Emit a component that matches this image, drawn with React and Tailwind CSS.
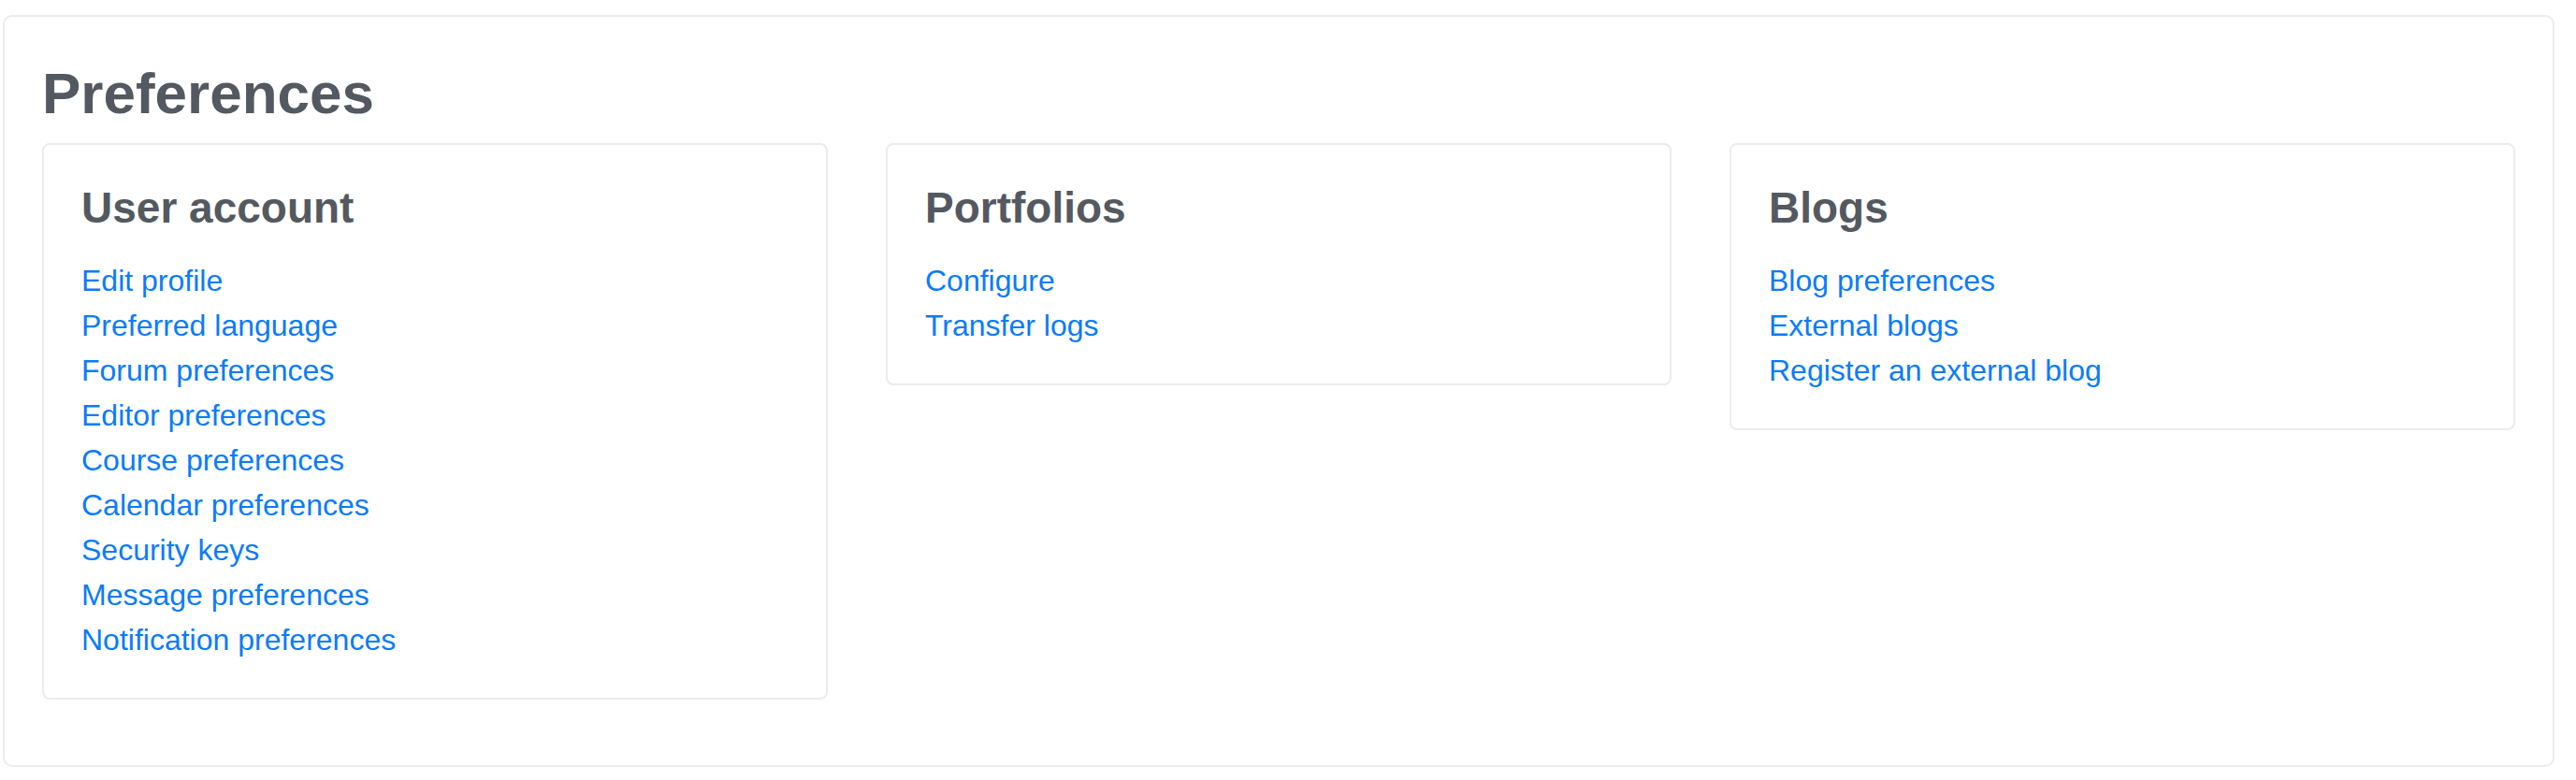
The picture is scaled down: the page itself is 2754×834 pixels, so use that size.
const sections = [
  {
    title: 'User account',
    links: [
      'Edit profile',
      'Preferred language',
      'Forum preferences',
      'Editor preferences',
      'Course preferences',
      'Calendar preferences',
      'Security keys',
      'Message preferences',
      'Notification preferences',
    ],
  },
  {
    title: 'Portfolios',
    links: ['Configure', 'Transfer logs'],
  },
  {
    title: 'Blogs',
    links: ['Blog preferences', 'External blogs', 'Register an external blog'],
  },
];

function PrefCard({ section }) {
  return (
    <div className="border-2 border-[#ececec] rounded-[8px] bg-white px-[40px] pt-[40px] pb-[38px]">
      <h3 className="text-[46px] leading-[1.2] font-bold text-[#545961] mb-[25px]">{section.title}</h3>
      <ul className="flex flex-col">
        {section.links.map((link) => (
          <li key={link} className="text-[32px] leading-[48px]">
            <a href="#" className="text-[#0a7bfa]">
              {link}
            </a>
          </li>
        ))}
      </ul>
    </div>
  );
}

export default function App() {
  return (
    <div className="min-h-screen bg-white pt-[16px] pl-[3px] pr-[23px] font-['Liberation_Sans',Arial,sans-serif]">
      <div className="border-2 border-[#ececec] rounded-[10px] h-[804px] px-[40px] pt-[45px]">
        <h2 className="text-[62px] leading-[1.2] font-bold text-[#545961] mb-[16px]">Preferences</h2>
        <div className="grid grid-cols-3 gap-x-[62px] items-start">
          {sections.map((s) => (
            <PrefCard key={s.title} section={s} />
          ))}
        </div>
      </div>
    </div>
  );
}
